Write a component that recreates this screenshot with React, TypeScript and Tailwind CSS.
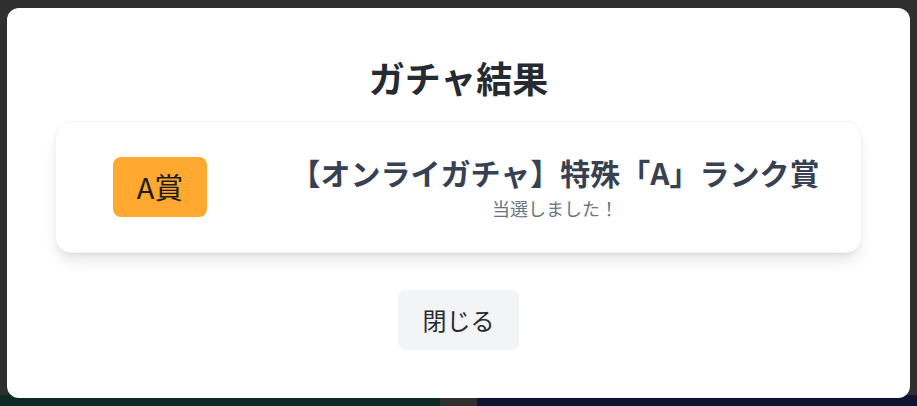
/**
 * Gacha result modal: a title, one prize card (rank badge + prize name) and a
 * close button, laid over a dimmed page.
 */
const FONT = { fontFamily: '"Noto Sans CJK JP", "Noto Sans", sans-serif' };

export default function App() {
  return (
    <div className="relative h-[406px] w-[917px] overflow-hidden bg-[#2f2f2f]" style={FONT}>
      {/* Dimmed page behind the modal */}
      <div className="flex h-full flex-col justify-end">
        <div className="flex h-[11px]">
          <div className="w-[440px] bg-[#0c2a23]" />
          <div className="w-[37px] bg-[#2f2f2f]" />
          <div className="flex-1 bg-[#0f1530]" />
        </div>
      </div>

      {/* Modal */}
      <div className="absolute left-[7px] top-[8px] flex h-[390px] w-[903px] flex-col items-center rounded-xl bg-white px-12 pt-12">
        <h1 className="text-[36px] font-bold leading-[43px] text-[#262a31]">ガチャ結果</h1>

        <div className="mt-[22px] flex h-[132px] w-full items-center rounded-2xl border border-gray-100 bg-white pl-[57px] pr-6 shadow-lg">
          <div className="flex h-[60px] w-[94px] items-center justify-center rounded-lg bg-[#ffa930] text-[29px] text-[#1c1c1c]">
            A賞
          </div>
          <div className="ml-[66px] flex flex-1 flex-col items-center">
            <p className="text-[30px] font-bold leading-[36px] text-[#374151]">
              【オンライガチャ】特殊「A」ランク賞
            </p>
            <p className="mt-[6px] text-[18px] leading-[24px] text-[#6b7280]">当選しました！</p>
          </div>
        </div>

        <button
          type="button"
          className="mt-[37px] h-[60px] w-[121px] rounded-lg bg-[#f3f4f6] text-[24px] text-[#262a31]"
        >
          閉じる
        </button>
      </div>
    </div>
  );
}
